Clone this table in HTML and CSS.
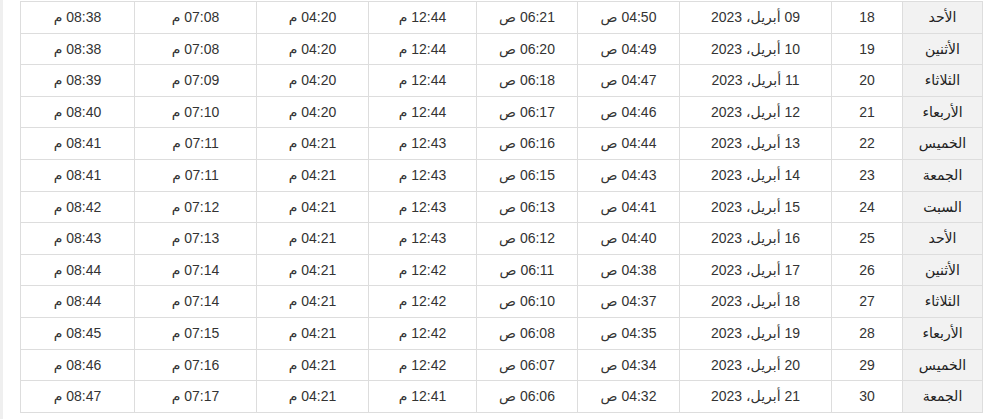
FILE: index.html
```html
<!DOCTYPE html>
<html lang="ar" dir="rtl">
<head>
<meta charset="utf-8">
<link rel="stylesheet" href="styles.css">
</head>
<body>
<div class="page">
<table class="prayer">
<colgroup>
<col class="c-day"><col class="c-num"><col class="c-date"><col class="c-t1"><col class="c-t2"><col class="c-t3"><col class="c-t4"><col class="c-t5"><col class="c-t6">
</colgroup>
<tbody>
<tr><th>الأحد</th><td>18</td><td>09 أبريل، 2023</td><td>04:50 ص</td><td>06:21 ص</td><td>12:44 م</td><td>04:20 م</td><td>07:08 م</td><td>08:38 م</td></tr>
<tr><th>الأثنين</th><td>19</td><td>10 أبريل، 2023</td><td>04:49 ص</td><td>06:20 ص</td><td>12:44 م</td><td>04:20 م</td><td>07:08 م</td><td>08:38 م</td></tr>
<tr><th>الثلاثاء</th><td>20</td><td>11 أبريل، 2023</td><td>04:47 ص</td><td>06:18 ص</td><td>12:44 م</td><td>04:20 م</td><td>07:09 م</td><td>08:39 م</td></tr>
<tr><th>الأربعاء</th><td>21</td><td>12 أبريل، 2023</td><td>04:46 ص</td><td>06:17 ص</td><td>12:44 م</td><td>04:20 م</td><td>07:10 م</td><td>08:40 م</td></tr>
<tr><th>الخميس</th><td>22</td><td>13 أبريل، 2023</td><td>04:44 ص</td><td>06:16 ص</td><td>12:43 م</td><td>04:21 م</td><td>07:11 م</td><td>08:41 م</td></tr>
<tr><th>الجمعة</th><td>23</td><td>14 أبريل، 2023</td><td>04:43 ص</td><td>06:15 ص</td><td>12:43 م</td><td>04:21 م</td><td>07:11 م</td><td>08:41 م</td></tr>
<tr><th>السبت</th><td>24</td><td>15 أبريل، 2023</td><td>04:41 ص</td><td>06:13 ص</td><td>12:43 م</td><td>04:21 م</td><td>07:12 م</td><td>08:42 م</td></tr>
<tr><th>الأحد</th><td>25</td><td>16 أبريل، 2023</td><td>04:40 ص</td><td>06:12 ص</td><td>12:43 م</td><td>04:21 م</td><td>07:13 م</td><td>08:43 م</td></tr>
<tr><th>الأثنين</th><td>26</td><td>17 أبريل، 2023</td><td>04:38 ص</td><td>06:11 ص</td><td>12:42 م</td><td>04:21 م</td><td>07:14 م</td><td>08:44 م</td></tr>
<tr><th>الثلاثاء</th><td>27</td><td>18 أبريل، 2023</td><td>04:37 ص</td><td>06:10 ص</td><td>12:42 م</td><td>04:21 م</td><td>07:14 م</td><td>08:44 م</td></tr>
<tr><th>الأربعاء</th><td>28</td><td>19 أبريل، 2023</td><td>04:35 ص</td><td>06:08 ص</td><td>12:42 م</td><td>04:21 م</td><td>07:15 م</td><td>08:45 م</td></tr>
<tr><th>الخميس</th><td>29</td><td>20 أبريل، 2023</td><td>04:34 ص</td><td>06:07 ص</td><td>12:42 م</td><td>04:21 م</td><td>07:16 م</td><td>08:46 م</td></tr>
<tr><th>الجمعة</th><td>30</td><td>21 أبريل، 2023</td><td>04:32 ص</td><td>06:06 ص</td><td>12:41 م</td><td>04:21 م</td><td>07:17 م</td><td>08:47 م</td></tr>
</tbody>
</table>
</div>
</body>
</html>
```
FILE: styles.css
```css
html, body {
  margin: 0;
  padding: 0;
  background: #fff;
}
.page {
  direction: ltr;
  border-left: 3px solid #efefef;
  padding: 1px 0 0 17px;
  height: 419px;
  box-sizing: border-box;
}
.prayer {
  direction: rtl;
  border-collapse: collapse;
  table-layout: fixed;
  width: 963px;
  font-family: "Liberation Sans", "DejaVu Sans", Arial, sans-serif;
  font-size: 14px;
  color: #333;
}
.c-day { width: 80px; }
.c-num { width: 71px; }
.c-date { width: 152px; }
.c-t1 { width: 102px; }
.c-t2 { width: 101px; }
.c-t3 { width: 108px; }
.c-t4 { width: 112px; }
.c-t5 { width: 122px; }
.c-t6 { width: 114px; }
.prayer th,
.prayer td {
  border: 1px solid #ddd;
  text-align: center;
  padding: 5px 4px;
  line-height: 20.6px;
  height: 20.6px;
  white-space: nowrap;
}
.prayer th {
  background: #f2f2f2;
  font-weight: normal;
  color: #222;
}
```
